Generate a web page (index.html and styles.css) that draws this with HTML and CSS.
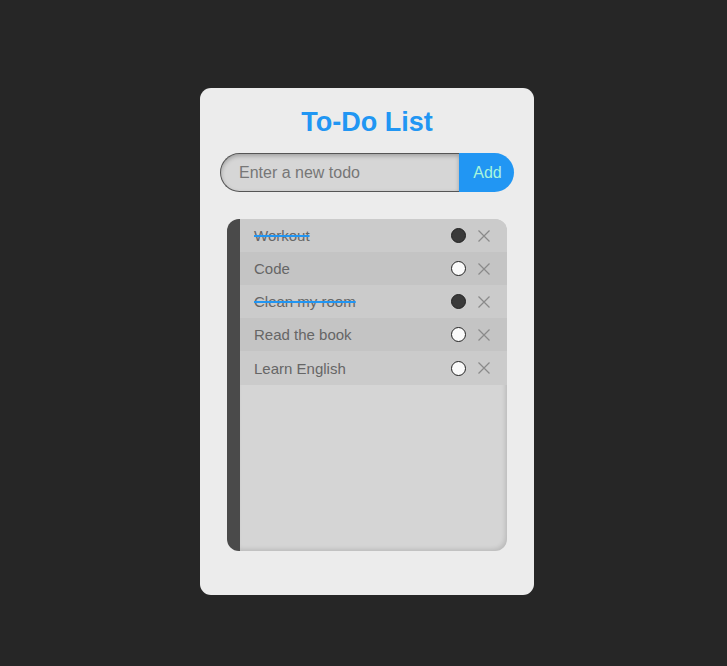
FILE: index.html
```html
<!DOCTYPE html>
<html lang="en">
<head>
  <meta charset="UTF-8">
  <meta name="viewport" content="width=device-width, initial-scale=1.0">
  <title>To-Do List</title>
  <link rel="stylesheet" href="styles.css">
</head>
<body>

  <div class="todo-card">
    <h1 class="title">To-Do List</h1>

    <div class="input-row">
      <input type="text" class="todo-input" placeholder="Enter a new todo">
      <button class="add-button">Add</button>
    </div>

    <ul class="todo-list">
      <li class="todo-item done">
        <span class="todo-text">Workout</span>
        <span class="check"></span>
        <svg class="remove" viewBox="0 0 12 12"><path d="M0.5 0.5 L11.5 11.5 M11.5 0.5 L0.5 11.5"/></svg>
      </li>
      <li class="todo-item">
        <span class="todo-text">Code</span>
        <span class="check"></span>
        <svg class="remove" viewBox="0 0 12 12"><path d="M0.5 0.5 L11.5 11.5 M11.5 0.5 L0.5 11.5"/></svg>
      </li>
      <li class="todo-item done">
        <span class="todo-text">Clean my room</span>
        <span class="check"></span>
        <svg class="remove" viewBox="0 0 12 12"><path d="M0.5 0.5 L11.5 11.5 M11.5 0.5 L0.5 11.5"/></svg>
      </li>
      <li class="todo-item">
        <span class="todo-text">Read the book</span>
        <span class="check"></span>
        <svg class="remove" viewBox="0 0 12 12"><path d="M0.5 0.5 L11.5 11.5 M11.5 0.5 L0.5 11.5"/></svg>
      </li>
      <li class="todo-item">
        <span class="todo-text">Learn English</span>
        <span class="check"></span>
        <svg class="remove" viewBox="0 0 12 12"><path d="M0.5 0.5 L11.5 11.5 M11.5 0.5 L0.5 11.5"/></svg>
      </li>
    </ul>
  </div>

</body>
</html>
```

FILE: styles.css
```css
body {
  background-color: #262626;
  margin: 0;
  padding: 88px 0 0 200px;
  font-family: "Liberation Sans", Arial, sans-serif;
}

.todo-card {
  width: 334px;
  height: 507px;
  box-sizing: border-box;
  background-color: #ececec;
  border-radius: 11px;
  padding: 17px 20px 0 20px;
}

.title {
  margin: 0 0 13px 0;
  font-size: 27px;
  line-height: 35px;
  text-align: center;
  color: #2196f3;
}

.input-row {
  display: flex;
  height: 39px;
}

.todo-input {
  flex-grow: 1;
  box-sizing: border-box;
  height: 39px;
  margin: 0;
  padding: 0 0 0 18px;
  border: 1px solid #555;
  border-right: none;
  border-radius: 20px 0 0 20px;
  background-color: #d6d6d6;
  box-shadow: inset 0px 2px 4px rgba(0, 0, 0, 0.25);
  font-family: inherit;
  font-size: 16px;
  color: #444;
  outline: none;
}

.todo-input::placeholder {
  color: #777;
}

.add-button {
  width: 55px;
  height: 39px;
  border: none;
  border-radius: 0 20px 20px 0;
  background-color: #2196f3;
  color: #a8f5dc;
  font-family: inherit;
  font-size: 16px;
  padding: 0 0 0 2px;
  cursor: pointer;
}

.todo-list {
  list-style: none;
  margin: 27px 7px 0 7px;
  padding: 0;
  height: 332px;
  box-sizing: border-box;
  background-color: #d5d5d5;
  border-left: 13px solid #4a4a4a;
  border-radius: 12px;
  overflow: hidden;
  box-shadow: inset -2px -2px 4px rgba(0, 0, 0, 0.12);
}

.todo-item {
  display: flex;
  align-items: center;
  height: 33px;
  padding: 0 17px 0 14px;
  background-color: #cbcbcb;
  color: #666;
  font-size: 15px;
}

.todo-item:nth-child(even) {
  background-color: #c4c4c4;
}

.todo-item:last-child {
  height: 34px;
}

.todo-text {
  flex-grow: 1;
}

.done .todo-text {
  text-decoration: line-through;
  text-decoration-color: #2196f3;
  text-decoration-thickness: 2px;
}

.check {
  width: 13px;
  height: 13px;
  border: 1px solid #222;
  border-radius: 50%;
  background-color: #fafafa;
}

.done .check {
  background-color: #3a3a3a;
}

.remove {
  width: 12px;
  height: 12px;
  margin-left: 12px;
  fill: none;
  stroke: #8a8a8a;
  stroke-width: 1.2;
}
```
